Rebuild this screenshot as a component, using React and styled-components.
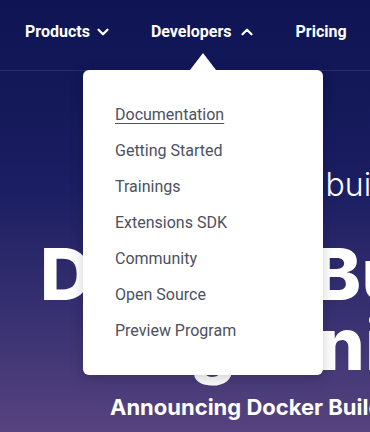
import React from "react";
import styled, { createGlobalStyle } from "styled-components";
import { ChevronDown, ChevronUp } from "lucide-react";

const GlobalStyle = createGlobalStyle`
  html, body {
    margin: 0;
    padding: 0;
    background: #0f1554;
  }
  * {
    box-sizing: border-box;
  }
`;

const Page = styled.div`
  position: relative;
  width: 370px;
  height: 432px;
  overflow: hidden;
  background: linear-gradient(
    180deg,
    #0f1554 0%,
    #121858 20%,
    #1c1f63 45%,
    #3a3272 75%,
    #56437f 100%
  );
  font-family: Roboto, "Liberation Sans", sans-serif;
`;

const Nav = styled.nav`
  height: 71px;
  display: flex;
  align-items: flex-start;
  padding: 22px 0 0 25px;
  gap: 39px;
  border-bottom: 1px solid #2a2f6c;
  white-space: nowrap;
`;

const NavItem = styled.div`
  display: flex;
  align-items: center;
  gap: ${(p) => (p.open ? "7px" : "4px")};
  color: #ffffff;
  font-size: 16px;
  font-weight: 700;
  line-height: 20px;
  cursor: pointer;
`;

const Dropdown = styled.div`
  position: absolute;
  top: 70px;
  left: 83px;
  width: 240px;
  padding: 27px 0 26px 32px;
  background: #ffffff;
  border-radius: 6px;
  box-shadow: 0 4px 14px rgba(0, 0, 0, 0.18);

  &::before {
    content: "";
    position: absolute;
    top: -17px;
    left: 107px;
    border-left: 13px solid transparent;
    border-right: 13px solid transparent;
    border-bottom: 17px solid #ffffff;
  }
`;

const MenuList = styled.ul`
  list-style: none;
  margin: 0;
  padding: 0;
`;

const MenuLink = styled.li`
  height: 36px;
  line-height: 36px;
  font-size: 16px;
  font-weight: 400;
  color: #4b5162;
  text-decoration: ${(p) => (p.active ? "underline" : "none")};
  text-underline-offset: 3px;
  text-decoration-thickness: 1px;
  cursor: pointer;
`;

const Hero = styled.section`
  display: flex;
  flex-direction: column;
  padding-top: 96px;
  white-space: nowrap;
  color: #ffffff;
  font-family: Inter, "Liberation Sans", sans-serif;
`;

const Kicker = styled.div`
  margin-left: ${(p) => p.indent}px;
  font-size: 32px;
  font-weight: 300;
  line-height: 36px;
`;

const Title = styled.h1`
  margin: 36px 0 0;
  font-size: 72px;
  font-weight: 800;
  line-height: 70px;
  letter-spacing: 0.5px;
`;

const TitleLine = styled.span`
  display: block;
  margin-left: ${(p) => p.indent}px;
`;

const Subtitle = styled.p`
  margin: 14px 0 0 ${(p) => p.indent}px;
  font-size: 22px;
  font-weight: 700;
  line-height: 28px;
`;

const links = [
  "Documentation",
  "Getting Started",
  "Trainings",
  "Extensions SDK",
  "Community",
  "Open Source",
  "Preview Program",
];

export default function App() {
  return (
    <Page>
      <GlobalStyle />
      <Nav>
        <NavItem>
          Products <ChevronDown size={18} strokeWidth={3} />
        </NavItem>
        <NavItem open>
          Developers <ChevronUp size={18} strokeWidth={3} />
        </NavItem>
        <NavItem>Pricing</NavItem>
      </Nav>

      <Hero>
        <Kicker indent={225}>Faster builds, everywhere</Kicker>
        <Title>
          <TitleLine indent={40}>Docker Build Cloud</TitleLine>
          <TitleLine indent={121}>Big &amp; nimble</TitleLine>
        </Title>
        <Subtitle indent={110}>Announcing Docker Build Cloud</Subtitle>
      </Hero>

      <Dropdown>
        <MenuList>
          {links.map((label, i) => (
            <MenuLink key={label} active={i === 0}>
              {label}
            </MenuLink>
          ))}
        </MenuList>
      </Dropdown>
    </Page>
  );
}
